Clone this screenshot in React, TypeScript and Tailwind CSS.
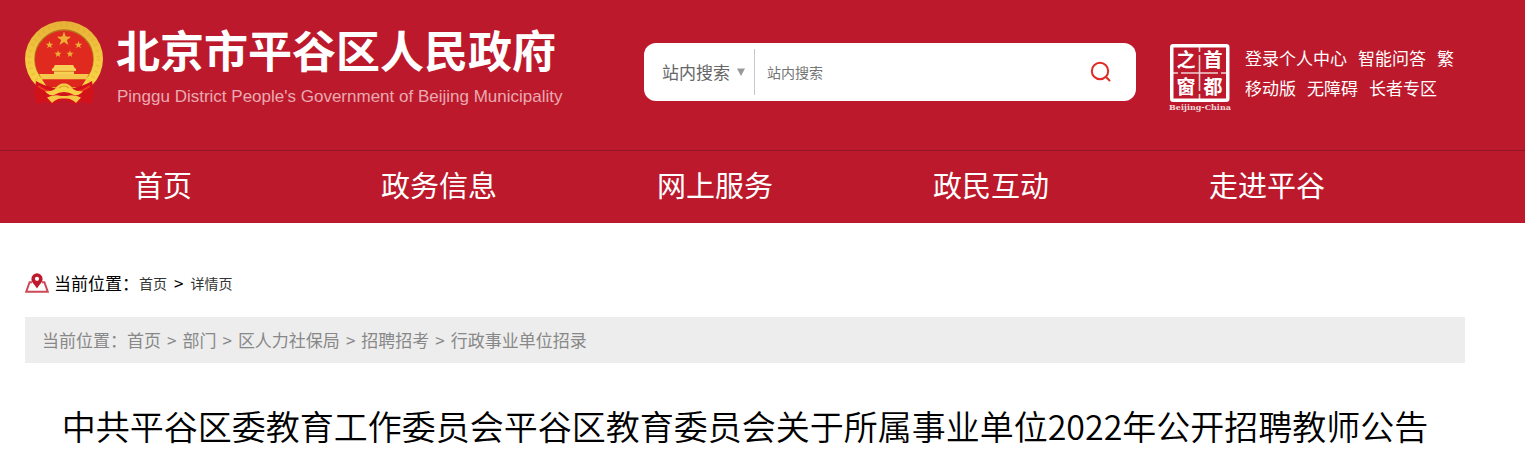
import React from "react";

const navItems = ["首页", "政务信息", "网上服务", "政民互动", "走进平谷"];
const userLinks = [
  ["登录个人中心", "智能问答", "繁"],
  ["移动版", "无障碍", "长者专区"],
];
const trail = ["首页", "部门", "区人力社保局", "招聘招考", "行政事业单位招录"];

function Star({ x, y, r }: { x: number; y: number; r: number }) {
  const points = Array.from({ length: 10 }, (_, i) => {
    const radius = i % 2 === 0 ? r : r * 0.4;
    const angle = (Math.PI / 5) * i - Math.PI / 2;
    return `${x + radius * Math.cos(angle)},${y + radius * Math.sin(angle)}`;
  }).join(" ");
  return <polygon points={points} fill="#eeb034" />;
}

function Emblem() {
  return (
    <svg viewBox="0 0 78 84" className="h-[84px] w-[78px] shrink-0" aria-hidden="true">
      <defs>
        <linearGradient id="gold" x1="0" y1="0" x2="0" y2="1">
          <stop offset="0" stopColor="#e6b036" />
          <stop offset="0.5" stopColor="#f3ca42" />
          <stop offset="1" stopColor="#fbd548" />
        </linearGradient>
      </defs>
      <ellipse cx="39" cy="38" rx="39" ry="38" fill="url(#gold)" />
      <ellipse cx="39" cy="38" rx="34.5" ry="33.5" fill="none" stroke="#dc9f29" strokeWidth="4" strokeDasharray="2 4" opacity="0.25" />
      <ellipse cx="39" cy="38" rx="29.8" ry="29.8" fill="#b9701f" />
      <ellipse cx="39" cy="38.7" rx="29" ry="29" fill="#e02a20" />
      <Star x={39} y={18} r={7.5} />
      <Star x={24.5} y={24} r={4} />
      <Star x={53.5} y={24} r={4} />
      <Star x={33} y={33} r={3.8} />
      <Star x={45} y={33} r={3.8} />
      <path d="M30 44 H48 L50 47.5 H28 Z M27 47.5 H51 V50 H27 Z M29 50 H49 V54 H29 Z" fill="#f8cf57" />
      <path d="M29 50.3 H49" stroke="#d88e24" strokeWidth="1" />
      <path d="M14 53 H64 L61 58.5 H17 Z" fill="#f5c74b" />
      <path d="M17 58.5 H61 L56 66 H22 Z" fill="#de261d" />
      <path d="M11 60 Q19 65 30 67 L39 69 L48 67 Q59 65 67 60 L69 73 L66 83 L58 81 L50 83 L39 79 L28 83 L20 81 L12 83 L9 73 Z" fill="#d2121a" />
      <path d="M13 65 Q20 70 27 71 M65 65 Q58 70 51 71" stroke="#ee3b22" strokeWidth="1.8" fill="none" />
      <path d="M20 70 Q26 71 30 68 Q34 62 39 62.5 Q44 62 48 68 Q52 71 58 70 Q55 75 49 74 Q44 71 39 71 Q34 71 29 74 Q23 75 20 70 Z" fill="#f8ce44" />
      <path d="M34 67 Q39 63 44 67" stroke="#dc9a2b" strokeWidth="1.2" fill="none" />
      <path d="M22 76.5 Q30 73 36 75 H42 Q48 73 56 76.5 L51 82 Q46 77 41 77.5 H37 Q32 77 27 82 Z" fill="#f6c646" />
    </svg>
  );
}

function CapitalSeal() {
  return (
    <svg viewBox="0 0 66 70" className="h-[70px] w-[66px] shrink-0" role="img" aria-label="首都之窗">
      <rect x="4.75" y="2.75" width="56" height="54.5" rx="1.5" fill="none" stroke="#fff" strokeWidth="3.5" />
      <path d="M32.5 4 V9 M32.5 12 V48 M32.5 51 V57 M6 30 H11 M14 30 H51 M54 30 H60" stroke="#fff" strokeWidth="1.6" opacity="0.8" />
      <g fill="#fff" fontSize="19" fontWeight="700" fontFamily="'Noto Sans CJK SC', sans-serif" textAnchor="middle">
        <text x="19" y="24">之</text>
        <text x="46" y="24">首</text>
        <text x="19" y="51">窗</text>
        <text x="46" y="51">都</text>
      </g>
      <text x="33" y="67" fill="#f6dada" fontSize="8" fontWeight="700" fontFamily="'DejaVu Serif', serif" textAnchor="middle">
        Beijing-China
      </text>
    </svg>
  );
}

function PinIcon() {
  return (
    <svg viewBox="0 0 24 20" className="h-5 w-6 shrink-0" aria-hidden="true">
      <path d="M7 9.2 H4.6 L1.2 18.8 H22.8 L19.4 9.2 H17" fill="none" stroke="#cb4a57" strokeWidth="2" />
      <path d="M12 0.3 a5.6 5.6 0 0 1 5.6 5.6 c0 3.6-3.6 5.6-5.6 9.6 c-2-4-5.6-6-5.6-9.6 A5.6 5.6 0 0 1 12 0.3 Z" fill="#be1a2c" />
      <circle cx="12" cy="5.8" r="2.1" fill="#fff" />
    </svg>
  );
}

export default function App() {
  return (
    <div className="bg-white font-['Noto_Sans_CJK_SC',sans-serif] text-[17px] text-black">
      <header className="bg-[#bc1a2c] text-white">
        <div className="flex h-[150px] items-start pr-[60px] pl-[25px]">
          <a href="#" className="flex w-[619px] shrink-0 gap-[13px] pt-[21px]">
            <Emblem />
            <span className="flex flex-col pt-1">
              <span className="text-[44px] leading-[48px] font-bold">北京市平谷区人民政府</span>
              <span className="pt-3.5 pl-px font-['Liberation_Sans',sans-serif] text-[17px] leading-5 text-[#eba9b1]">
                Pinggu District People's Government of Beijing Municipality
              </span>
            </span>
          </a>
          <form className="mt-[43px] flex h-[58px] min-w-0 flex-1 items-center rounded-xl bg-white" onSubmit={(e) => e.preventDefault()}>
            <button type="button" className="flex h-[46px] w-[111px] shrink-0 items-center gap-[7px] border-r border-[#c8c8c8] pl-[18px] whitespace-nowrap text-[#666]">
              站内搜索
              <svg viewBox="0 0 8 8" className="size-2" aria-hidden="true">
                <path d="M0 0.5 H8 L4 8 Z" fill="#999" />
              </svg>
            </button>
            <input
              type="text"
              aria-label="站内搜索"
              placeholder="站内搜索"
              className="h-full min-w-0 flex-1 bg-transparent pl-3 text-sm text-[#333] outline-none placeholder:text-[#757575]"
            />
            <button type="submit" aria-label="搜索" className="mr-6 shrink-0">
              <svg viewBox="0 0 22 22" className="size-[22px]" fill="none" stroke="#df2a25" strokeWidth="2" strokeLinecap="round" aria-hidden="true">
                <circle cx="10" cy="10" r="8.2" />
                <path d="M16 16 L19.5 19.5" />
              </svg>
            </button>
          </form>
          <div className="ml-[31px] flex w-[298px] shrink-0 gap-3 pt-[43px]">
            <CapitalSeal />
            <div className="whitespace-nowrap">
              {userLinks.map((row) => (
                <div key={row[0]} className="flex gap-[11px] leading-[30px]">
                  {row.map((label) => (
                    <a key={label} href="#">{label}</a>
                  ))}
                </div>
              ))}
            </div>
          </div>
        </div>
        <nav className="grid grid-cols-5 border-t border-[#8f1824] pr-[120px] pb-1.5 pl-[25px] text-center text-[29px] leading-[66px]">
          {navItems.map((label) => (
            <a key={label} href="#">{label}</a>
          ))}
        </nav>
      </header>
      <main className="pt-12 pr-[60px] pl-[25px]">
        <div className="flex items-center gap-[5px] leading-6">
          <PinIcon />
          <p className="flex items-center">
            当前位置：
            <a href="#" className="text-sm text-[#333]">首页</a>
            <span className="px-[7px]">&gt;</span>
            <a href="#" className="text-sm text-[#333]">详情页</a>
          </p>
        </div>
        <div className="mt-[22px] flex bg-[#ededed] pl-[17px] leading-[46px] text-[#888]">
          当前位置：
          {trail.map((label, i) => (
            <React.Fragment key={label}>
              {i > 0 && <span className="px-[6px]">&gt;</span>}
              <a href="#">{label}</a>
            </React.Fragment>
          ))}
        </div>
        <h1 className="pt-9 text-center text-[34px] leading-[54px] font-[350] whitespace-nowrap">
          中共平谷区委教育工作委员会平谷区教育委员会关于所属事业单位2022年公开招聘教师公告
        </h1>
      </main>
    </div>
  );
}
